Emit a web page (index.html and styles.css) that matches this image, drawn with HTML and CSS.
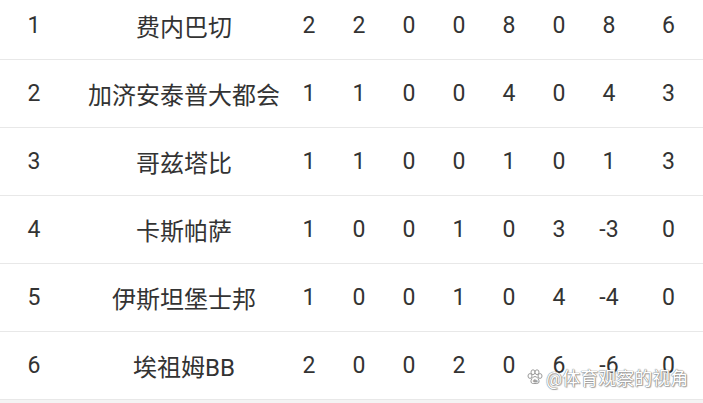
FILE: index.html
```html
<!DOCTYPE html>
<html lang="zh">
<head>
    <meta charset="UTF-8">
    <meta name="viewport" content="width=device-width, initial-scale=1.0">
    <title>积分榜</title>
    <link rel="stylesheet" href="styles.css">
</head>
<body>
    <div class="standings">
        <div class="row">
            <div class="rank">1</div><div class="team">费内巴切</div>
            <div class="num">2</div><div class="num">2</div><div class="num">0</div><div class="num">0</div><div class="num">8</div><div class="num">0</div><div class="num">8</div><div class="num">6</div>
        </div>
        <div class="row">
            <div class="rank">2</div><div class="team">加济安泰普大都会</div>
            <div class="num">1</div><div class="num">1</div><div class="num">0</div><div class="num">0</div><div class="num">4</div><div class="num">0</div><div class="num">4</div><div class="num">3</div>
        </div>
        <div class="row">
            <div class="rank">3</div><div class="team">哥兹塔比</div>
            <div class="num">1</div><div class="num">1</div><div class="num">0</div><div class="num">0</div><div class="num">1</div><div class="num">0</div><div class="num">1</div><div class="num">3</div>
        </div>
        <div class="row">
            <div class="rank">4</div><div class="team">卡斯帕萨</div>
            <div class="num">1</div><div class="num">0</div><div class="num">0</div><div class="num">1</div><div class="num">0</div><div class="num">3</div><div class="num">-3</div><div class="num">0</div>
        </div>
        <div class="row">
            <div class="rank">5</div><div class="team">伊斯坦堡士邦</div>
            <div class="num">1</div><div class="num">0</div><div class="num">0</div><div class="num">1</div><div class="num">0</div><div class="num">4</div><div class="num">-4</div><div class="num">0</div>
        </div>
        <div class="row">
            <div class="rank">6</div><div class="team">埃祖姆BB</div>
            <div class="num">2</div><div class="num">0</div><div class="num">0</div><div class="num">2</div><div class="num">0</div><div class="num">6</div><div class="num">-6</div><div class="num">0</div>
        </div>
        <div class="footer"></div>

        <div class="watermark">
            <svg class="paw" width="16" height="16" viewBox="0 0 16 16">
                <g fill="#fff" stroke="#9a9a9a" stroke-width="1">
                    <ellipse cx="3" cy="7" rx="2" ry="2.4"/>
                    <ellipse cx="6" cy="3.2" rx="2" ry="2.4"/>
                    <ellipse cx="10" cy="3.2" rx="2" ry="2.4"/>
                    <ellipse cx="13" cy="7" rx="2" ry="2.4"/>
                    <path d="M8 7.5 C5.5 7.5 3.5 11 4 13 C4.5 15 6.5 14.5 8 14.5 C9.5 14.5 11.5 15 12 13 C12.5 11 10.5 7.5 8 7.5 Z"/>
                </g>
                <text x="6.2" y="13" font-size="3.6" fill="#9a9a9a" font-family="Roboto, sans-serif">du</text>
            </svg>
            <span>@体育观察的视角</span>
        </div>
    </div>
</body>
</html>
```

FILE: styles.css
```css
body {
    margin: 0;
    background-color: #fff;
    font-family: Roboto, "Noto Sans CJK SC", sans-serif;
    color: #333;
    overflow: hidden;
}
.standings {
    position: relative;
    margin-top: -8px;
}
.row {
    display: grid;
    grid-template-columns: 68px 216px repeat(7, 50px) 1fr;
    align-items: center;
    height: 67px;
    border-bottom: 1px solid #e8e8e8;
    font-size: 23px;
}
.rank,
.num {
    text-align: center;
}
.team {
    padding-left: 16px;
    text-align: center;
    white-space: nowrap;
    font-size: 24px;
}
.footer {
    height: 20px;
    background-color: #f4f4f4;
}
.watermark {
    position: absolute;
    left: 527px;
    top: 372px;
    display: flex;
    align-items: center;
    gap: 3px;
    font-size: 18px;
    color: #fff;
    text-shadow: 0 0 1px #777, 0 0 1px #777, 1px 1px 1px #aaa;
}
.paw {
    width: 16px;
    height: 16px;
}
```
